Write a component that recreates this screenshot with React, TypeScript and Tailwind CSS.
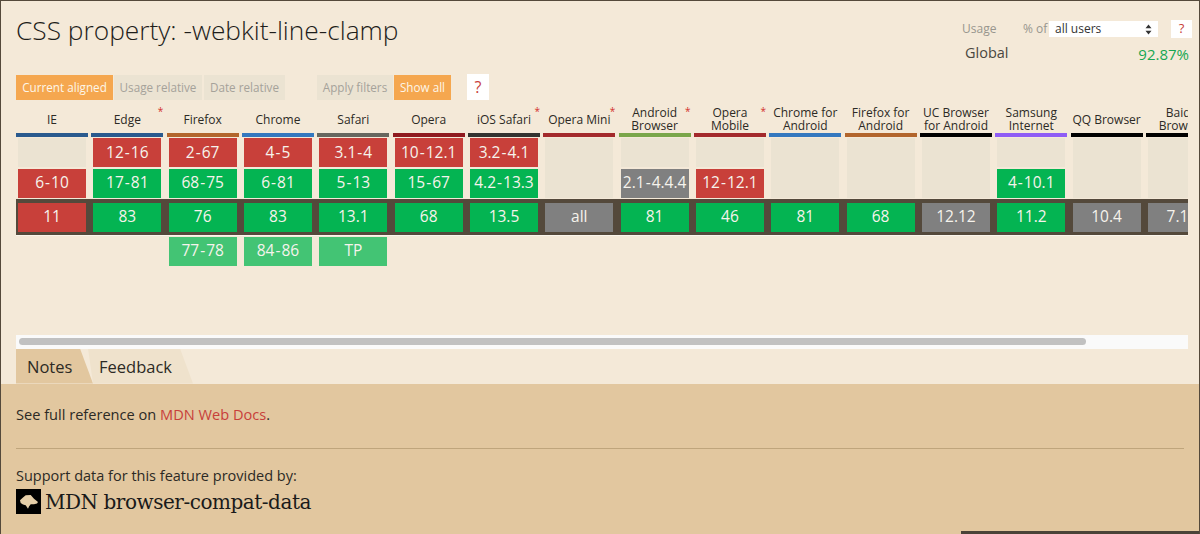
type Cell = [string, string] | null;
const R = 'bg-[#c8403a]', G = 'bg-[#04b452]', L = 'bg-[#43c474]', Y = 'bg-[#808080]', E = 'bg-[#ebe3d2]';

const cols: { name: string[]; bar: string; star?: boolean; r1: Cell; r2: Cell; cur: [string, string]; fut?: [string, string] }[] = [
  { name: ['IE'], bar: 'bg-[#2a5a8e]', r1: null, r2: ['6-10', R], cur: ['11', R] },
  { name: ['Edge'], bar: 'bg-[#2a5a8e]', star: true, r1: ['12-16', R], r2: ['17-81', G], cur: ['83', G] },
  { name: ['Firefox'], bar: 'bg-[#b2652c]', r1: ['2-67', R], r2: ['68-75', G], cur: ['76', G], fut: ['77-78', L] },
  { name: ['Chrome'], bar: 'bg-[#3478bf]', r1: ['4-5', R], r2: ['6-81', G], cur: ['83', G], fut: ['84-86', L] },
  { name: ['Safari'], bar: 'bg-[#67675f]', r1: ['3.1-4', R], r2: ['5-13', G], cur: ['13.1', G], fut: ['TP', L] },
  { name: ['Opera'], bar: 'bg-[#8f1a1f]', r1: ['10-12.1', R], r2: ['15-67', G], cur: ['68', G] },
  { name: ['iOS Safari'], bar: 'bg-[#333330]', star: true, r1: ['3.2-4.1', R], r2: ['4.2-13.3', G], cur: ['13.5', G] },
  { name: ['Opera Mini'], bar: 'bg-[#a32a2c]', star: true, r1: null, r2: null, cur: ['all', Y] },
  { name: ['Android', 'Browser'], bar: 'bg-[#7aa64a]', star: true, r1: null, r2: ['2.1-4.4.4', Y], cur: ['81', G] },
  { name: ['Opera', 'Mobile'], bar: 'bg-[#a32a2c]', star: true, r1: null, r2: ['12-12.1', R], cur: ['46', G] },
  { name: ['Chrome for', 'Android'], bar: 'bg-[#3478bf]', r1: null, r2: null, cur: ['81', G] },
  { name: ['Firefox for', 'Android'], bar: 'bg-[#b2652c]', r1: null, r2: null, cur: ['68', G] },
  { name: ['UC Browser', 'for Android'], bar: 'bg-black', r1: null, r2: null, cur: ['12.12', Y] },
  { name: ['Samsung', 'Internet'], bar: 'bg-[#8f5cf5]', r1: null, r2: ['4-10.1', G], cur: ['11.2', G] },
  { name: ['QQ Browser'], bar: 'bg-black', r1: null, r2: null, cur: ['10.4', Y] },
  { name: ['Baidu', 'Browser'], bar: 'bg-black', r1: null, r2: null, cur: ['7.12', Y] },
];

const gridCls = 'grid grid-cols-[repeat(16,75.33px)] w-[1206px]';

function Ver({ v }: { v: string }) {
  const parts = v.split('-');
  return (
    <span className="whitespace-nowrap">
      {parts.map((p, i) => (
        <span key={i}>
          {i > 0 && <span className="mx-[1px]">-</span>}
          {p}
        </span>
      ))}
    </span>
  );
}

function VCell({ c, h = 'h-[29px]' }: { c: Cell; h?: string }) {
  if (!c) return <div className={`w-[68px] ml-[2px] ${h} ${E}`} />;
  return (
    <div className={`w-[68px] ml-[2px] ${h} ${c[1]} flex items-center justify-center text-[15.5px] leading-none text-[#f6f3ec] overflow-hidden`}>
      <Ver v={c[0]} />
    </div>
  );
}

function Btn({ label, on, w }: { label: string; on?: boolean; w: string }) {
  return (
    <div className={`${w} h-[25px] flex items-center justify-center text-[11.7px] ${on ? 'bg-[#f5a74f] text-[#fdf6e9]' : 'bg-[#ebe3d2] text-[#a5a29a]'}`}>
      {label}
    </div>
  );
}

export default function App() {
  return (
    <div className="relative w-[1200px] h-[534px] overflow-hidden flex flex-col bg-[#f4e9d8] border-t border-l border-r border-[#54493b] text-[#2c2a25] font-['Open_Sans',sans-serif]">
      <div className="h-[74px] flex justify-between pl-[15px] shrink-0">
        <h1 className="text-[26.3px] leading-[36px] font-light mt-[11px] text-[#1e1d1a]">CSS property: -webkit-line-clamp</h1>
        <div className="w-[238px] pr-[5px] pt-[19px] shrink-0 flex flex-col">
          <div className="flex items-center h-[18px] text-[12px] text-[#98968e]">
            <span className="w-[62px] pl-[1px]">Usage</span>
            <span className="w-[26px]">% of</span>
            <div className="w-[109px] h-[16px] bg-white text-[#333] flex items-center justify-between pl-[6px] pr-[6px]">
              <span>all users</span>
              <svg width="7" height="11" viewBox="0 0 7 11"><path d="M3.5 0.5 L6.5 4.2 H0.5 Z M3.5 10.5 L6.5 6.8 H0.5 Z" fill="#333" /></svg>
            </div>
            <div className="ml-[13px] w-[21px] h-[18px] bg-white text-[#c8403a] text-[13px] flex items-center justify-center">?</div>
          </div>
          <div className="flex justify-between mt-[5px] pl-[4px] pr-[5px] text-[15px] leading-[20px]">
            <span className="text-[#4a4740] text-[14.5px]">Global</span>
            <span className="text-[#17a652] mt-[1px]">92.87%</span>
          </div>
        </div>
      </div>

      <div className="h-[28px] flex pl-[15px] items-start shrink-0 gap-[1px]">
        <Btn label="Current aligned" on w="w-[97px]" />
        <Btn label="Usage relative" w="w-[88px]" />
        <div className="w-0" />
        <Btn label="Date relative" w="w-[81px]" />
        <div className="w-[30px]" />
        <Btn label="Apply filters" w="w-[76px]" />
        <Btn label="Show all" on w="w-[57px]" />
        <div className="ml-[15px] w-[22px] h-[26px] -mt-[1px] bg-white text-[#c8403a] text-[16px] flex items-center justify-center">?</div>
      </div>

      <div className="ml-[15px] w-[1172px] overflow-hidden shrink-0">
        <div className={gridCls}>
          {cols.map((c) => (
            <div key={c.name.join()} className="relative w-[72px] h-[30px] pt-[2px] flex flex-col items-center justify-center text-[12px] leading-[13px] text-[#2c2a25] text-center whitespace-nowrap">
              {c.name.map((n) => <span key={n}>{n}</span>)}
              {c.star && <span className="absolute right-0 top-[3px] text-[10px] leading-none text-[#d3312c]">*</span>}
            </div>
          ))}
        </div>
        <div className={gridCls}>
          {cols.map((c) => <div key={c.name.join()} className={`w-[72px] h-[3.5px] ${c.bar}`} />)}
        </div>
        <div className={`${gridCls} mt-[1.5px]`}>
          {cols.map((c) => <VCell key={c.name.join()} c={c.r1} />)}
        </div>
        <div className={`${gridCls} mt-[1.5px]`}>
          {cols.map((c) =>
            !c.r1 && !c.r2 ? (
              <div key={c.name.join()} className={`w-[68px] ml-[2px] h-[30.5px] -mt-[1.5px] ${E}`} />
            ) : (
              <VCell key={c.name.join()} c={c.r2} />
            ),
          )}
        </div>
        <div className={`${gridCls} mt-[1px] bg-[#54493b] py-[4px] border-b border-b-[#fbf6ec] h-[37px]`}>
          {cols.map((c) => <VCell key={c.name.join()} c={c.cur} />)}
        </div>
        <div className={`${gridCls} mt-[1px]`}>
          {cols.map((c) => (c.fut ? <VCell key={c.name.join()} c={c.fut} /> : <div key={c.name.join()} />))}
        </div>
      </div>

      <div className="ml-[15px] w-[1172px] h-[13.5px] mt-[69.5px] bg-[#fafafa] flex items-center pl-[3px] shrink-0">
        <div className="w-[1067px] h-[7px] rounded-full bg-[#c1c1c1]" />
      </div>

      <div className="flex pl-[15px] h-[35px] shrink-0">
        <div className="w-[77px] h-[35px] bg-[#e2c79f] [clip-path:polygon(0_0,64px_0,77px_100%,0_100%)] pl-[11px] text-[16.5px] leading-[36px]">Notes</div>
        <div className="-ml-[5px] w-[105px] h-[35px] bg-[#efe2cc] [clip-path:polygon(0_0,92px_0,105px_100%,5px_100%)] pl-[11px] text-[16.5px] leading-[36px]">Feedback</div>
      </div>

      <div className="flex-1 bg-[#e2c79f] pl-[15px] pr-[15px]">
        <p className="mt-[20px] text-[14.6px] leading-[20px]">
          See full reference on <span className="text-[#c8403a]">MDN Web Docs</span>.
        </p>
        <div className="mt-[24px] h-px bg-[#bfa57c]" />
        <p className="mt-[17px] text-[14.5px] leading-[20px]">Support data for this feature provided by:</p>
        <div className="flex items-center mt-[3px] h-[26px]">
          <svg width="25" height="25" viewBox="0 0 25 25" className="shrink-0">
            <rect width="25" height="25" fill="#000" />
            <path d="M4 11.300 L7 8.500 L9.700 6.300 L14.700 6 L18 9.700 L22 13 L21 14.500 L18 15.300 L14.700 15.300 L13 17.500 L12 19.700 L9.700 16.300 L7 15.500 L4.700 14 Z" fill="#e6cfa9" />
          </svg>
          <span className="ml-[4px] text-[20px] leading-none font-['DejaVu_Serif',serif] text-[#1a1a1a] tracking-[-0.47px] whitespace-nowrap">MDN browser-compat-data</span>
        </div>
      </div>

      <div className="absolute right-0 bottom-0 w-[238px] h-[3px] bg-[#4a4338]" />
    </div>
  );
}
